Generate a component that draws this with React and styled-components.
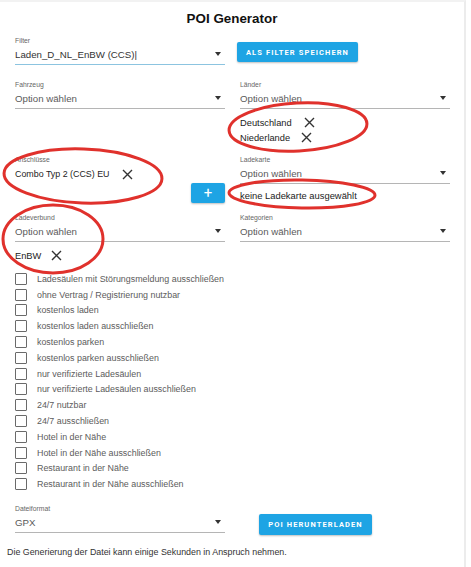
import styled, { createGlobalStyle } from "styled-components";

const GlobalStyle = createGlobalStyle`
  body {
    margin: 0;
    background: #ffffff;
    font-family: "Liberation Sans", Arial, sans-serif;
  }
`;

const Card = styled.div`
  position: relative;
  width: 466px;
  height: 567px;
  box-sizing: border-box;
  padding-top: 3px;
  border-top: 2px solid #f2f2f2;
  border-right: 2px solid #ececec;
  background: #fff;
`;

const Title = styled.h1`
  margin: 0;
  height: 31px;
  line-height: 28px;
  text-align: center;
  font-size: 13.4px;
  font-weight: bold;
  color: #111;
`;

const Grid = styled.div`
  display: grid;
  grid-template-columns: 210px 210px;
  column-gap: 15px;
  padding-left: 15px;
`;

const Cell = styled.div`
  display: flex;
  flex-direction: column;
  align-items: ${(p) => (p.$end ? "flex-end" : "stretch")};
  padding-bottom: ${(p) => p.$pb || 0}px;
`;

const Field = styled.div`
  display: flex;
  flex-direction: column;
  border-bottom: 1px solid ${(p) => (p.$focus ? "#8cc4e0" : "#b5b5b5")};
  padding-bottom: 2px;
  width: 210px;
`;

const Label = styled.div`
  font-size: 6.8px;
  line-height: 10px;
  color: #666;
`;

const ValueRow = styled.div`
  display: flex;
  align-items: center;
  justify-content: space-between;
  height: 16px;
  font-size: 9.7px;
  color: #555;
  padding-right: 4px;
`;

const Value = styled.span`
  color: ${(p) => (p.$dark ? "#333" : "#5a5a5a")};
`;

const Caret = styled.span`
  width: 0;
  height: 0;
  border-left: 3.5px solid transparent;
  border-right: 3.5px solid transparent;
  border-top: 4px solid #333;
`;

const Chips = styled.div`
  display: flex;
  flex-direction: column;
  padding-top: ${(p) => p.$pt || 6}px;
`;

const Chip = styled.div`
  display: flex;
  align-items: center;
  gap: ${(p) => p.$gap || 10}px;
  height: ${(p) => p.$h || 15}px;
  font-size: ${(p) => p.$size || 9.3}px;
  color: #222;
`;

const Note = styled.div`
  font-size: 9.4px;
  line-height: 14px;
  color: #222;
  padding-top: 5px;
`;

const Button = styled.button`
  border: none;
  border-radius: 2px;
  background: #1ea4e4;
  color: #fff;
  font-family: Roboto, "Liberation Sans", sans-serif;
  font-weight: bold;
  font-size: 7.5px;
  letter-spacing: 1.1px;
  padding: 0;
  width: ${(p) => p.$w}px;
  height: ${(p) => p.$h || 20}px;
  box-shadow: 0 1px 2px rgba(0, 0, 0, 0.25);
  margin-left: ${(p) => p.$ml || 0}px;
  margin-top: ${(p) => p.$mt || 0}px;
`;

const PlusButton = styled(Button)`
  font-size: 15px;
  font-weight: normal;
  letter-spacing: 0;
  line-height: 20px;
  width: 34px;
`;

const Checks = styled.div`
  display: flex;
  flex-direction: column;
  padding-left: 15px;
  padding-top: 8px;
`;

const CheckRow = styled.label`
  display: flex;
  align-items: center;
  height: 15.8px;
  gap: 10px;
  font-size: 8.9px;
  color: #5c5c5c;
`;

const Box = styled.span`
  width: 10px;
  height: 10px;
  border: 1px solid #6a6a6a;
  border-radius: 1px;
`;

const Footer = styled.div`
  display: flex;
  align-items: flex-start;
  padding-left: 15px;
  padding-top: 12px;
`;

const Hint = styled.p`
  margin: 0;
  padding: 12px 0 0 7px;
  font-size: 8.9px;
  color: #333;
`;

const Marks = styled.svg`
  position: absolute;
  left: 0;
  top: 0;
  pointer-events: none;
`;

const Cross = () => (
  <svg width="11" height="11" viewBox="0 0 11 11">
    <path d="M1 1L10 10M10 1L1 10" stroke="#333" strokeWidth="1.4" />
  </svg>
);

const Select = ({ label, value, focus, dark }) => (
  <Field $focus={focus}>
    <Label>{label}</Label>
    <ValueRow>
      <Value $dark={dark}>{value}</Value>
      <Caret />
    </ValueRow>
  </Field>
);

const options = [
  "Ladesäulen mit Störungsmeldung ausschließen",
  "ohne Vertrag / Registrierung nutzbar",
  "kostenlos laden",
  "kostenlos laden ausschließen",
  "kostenlos parken",
  "kostenlos parken ausschließen",
  "nur verifizierte Ladesäulen",
  "nur verifizierte Ladesäulen ausschließen",
  "24/7 nutzbar",
  "24/7 ausschließen",
  "Hotel in der Nähe",
  "Hotel in der Nähe ausschließen",
  "Restaurant in der Nähe",
  "Restaurant in der Nähe ausschließen",
];

export default function App() {
  return (
    <>
      <GlobalStyle />
      <Card>
        <Title>POI Generator</Title>
        <Grid>
          <Cell $pb={15}>
            <Select label="Filter" value="Laden_D_NL_EnBW (CCS)|" focus dark />
          </Cell>
          <Cell>
            <Button $w={121} $mt={6} $ml={-3}>ALS FILTER SPEICHERN</Button>
          </Cell>

          <Cell>
            <Select label="Fahrzeug" value="Option wählen" />
          </Cell>
          <Cell $pb={10}>
            <Select label="Länder" value="Option wählen" />
            <Chips>
              <Chip $gap={12}>Deutschland <Cross /></Chip>
              <Chip $gap={11}>Niederlande <Cross /></Chip>
            </Chips>
          </Cell>

          <Cell $pb={10}>
            <Label>Anschlüsse</Label>
            <Chips $pt={2}>
              <Chip $gap={12} $h={14} $size={8.9}>Combo Typ 2 (CCS) EU <Cross /></Chip>
            </Chips>
            <Cell $end>
              <PlusButton $mt={2}>+</PlusButton>
            </Cell>
          </Cell>
          <Cell $pb={9}>
            <Select label="Ladekarte" value="Option wählen" />
            <Note>keine Ladekarte ausgewählt</Note>
          </Cell>

          <Cell>
            <Select label="Ladeverbund" value="Option wählen" />
            <Chips>
              <Chip $gap={10}>EnBW <Cross /></Chip>
            </Chips>
          </Cell>
          <Cell>
            <Select label="Kategorien" value="Option wählen" />
          </Cell>
        </Grid>

        <Checks>
          {options.map((o) => (
            <CheckRow key={o}>
              <Box />
              {o}
            </CheckRow>
          ))}
        </Checks>

        <Footer>
          <Select label="Dateiformat" value="GPX" />
          <Button $w={113} $h={21} $ml={34} $mt={10}>POI HERUNTERLADEN</Button>
        </Footer>
        <Hint>Die Generierung der Datei kann einige Sekunden in Anspruch nehmen.</Hint>

        <Marks width="466" height="567" viewBox="0 0 466 567">
          <g fill="none" stroke="#e0312c" strokeWidth="3">
            <ellipse cx="298" cy="125" rx="69" ry="24" transform="rotate(-3 298 125)" />
            <ellipse cx="83" cy="174" rx="79" ry="27" transform="rotate(2 83 174)" />
            <ellipse cx="53" cy="237" rx="50" ry="34" />
            <ellipse cx="302" cy="192" rx="73" ry="14" transform="rotate(1 302 192)" />
          </g>
        </Marks>
      </Card>
    </>
  );
}
